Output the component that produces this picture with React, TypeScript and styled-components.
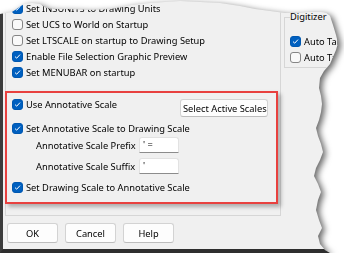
import styled, { createGlobalStyle } from 'styled-components';

const GlobalStyle = createGlobalStyle`
  html, body {
    margin: 0;
    padding: 0;
    background: #ffffff;
  }
  body {
    width: 344px;
    height: 253px;
    overflow: hidden;
    font-family: "Noto Sans", "Liberation Sans", sans-serif;
  }
`;

// torn paper edge of the screenshot (top and right)
const TORN = `polygon(
  0px 14px, 6px 13px, 12px 12px, 18px 8px, 24px 4px, 32px 3px, 40px 4px, 46px 8px,
  55px 9px, 70px 9px, 90px 10px, 110px 9px, 122px 7px, 132px 5px, 150px 3px, 165px 2px,
  180px 1px, 200px 2px, 220px 3px, 240px 6px, 255px 9px, 270px 11px, 285px 13px,
  300px 13px, 312px 12px, 320px 12px, 326px 13px, 330px 16px, 333px 25px, 336px 35px,
  338px 43px, 336px 50px, 333px 57px, 330px 64px, 324px 71px, 320px 78px, 319px 88px,
  321px 96px, 322px 104px, 321px 112px, 319px 120px, 316px 128px, 318px 136px,
  321px 144px, 323px 152px, 320px 160px, 316px 168px, 314px 176px, 318px 184px,
  321px 192px, 318px 200px, 316px 210px, 319px 220px, 322px 228px, 318px 236px,
  320px 244px, 325px 250px, 330px 253px, 0px 253px
)`;

const Shadow = styled.div`
  width: 344px;
  height: 253px;
  filter: drop-shadow(3px 2px 3px rgba(0, 0, 0, 0.6));
`;

const Dialog = styled.div`
  box-sizing: border-box;
  width: 344px;
  height: 253px;
  background: #f0f0f0;
  border-left: 3px solid #3b3b3b;
  border-bottom: 4px solid #2e2e2e;
  clip-path: ${TORN};
  display: flex;
  flex-direction: column;
  font-size: 9.3px;
  color: #000;
`;

const TopArea = styled.div`
  display: flex;
  height: 216px;
`;

const LeftPanel = styled.div`
  box-sizing: border-box;
  flex: none;
  width: 276px;
  margin-left: 2px;
  height: 216px;
  border: 1px solid #d6d6d6;
  border-top: none;
  display: flex;
  flex-direction: column;
`;

const OptionList = styled.div`
  display: flex;
  flex-direction: column;
  padding-left: 6px;
`;

const Row = styled.label<{ $mt?: number }>`
  display: flex;
  align-items: center;
  gap: 3px;
  height: 16px;
  margin-top: ${(p) => p.$mt ?? 0}px;
  white-space: nowrap;
`;

const Box = styled.span<{ $checked?: boolean }>`
  box-sizing: border-box;
  width: 11px;
  height: 11px;
  flex: none;
  border-radius: 3px;
  border: 1px solid ${(p) => (p.$checked ? '#0058b0' : '#858585')};
  background: ${(p) => (p.$checked ? '#0060c0' : '#f9f9f9')};
  display: flex;
  align-items: center;
  justify-content: center;
`;

const Check = ({ checked }: { checked?: boolean }) => (
  <Box $checked={checked}>
    {checked && (
      <svg width="7" height="7" viewBox="0 0 7 7">
        <polyline points="1,3.6 2.7,5.2 6,1.6" fill="none" stroke="#fff" strokeWidth="1" />
      </svg>
    )}
  </Box>
);

const Highlight = styled.div`
  box-sizing: border-box;
  margin: 11px 2px 0 -1px;
  border: 2px solid #e8413f;
  box-shadow: 3px 3px 4px rgba(0, 0, 0, 0.28);
  padding: 3px 8px 7px 5px;
  display: flex;
  flex-direction: column;
`;

const HeadRow = styled.div`
  display: flex;
  justify-content: space-between;
  align-items: flex-start;
  height: 20px;
`;

const Button = styled.button<{ $w?: number }>`
  box-sizing: border-box;
  width: ${(p) => (p.$w ? `${p.$w}px` : 'auto')};
  height: 18px;
  padding: 0 2px;
  margin-top: 3px;
  font: inherit;
  color: #000;
  background: #fdfdfd;
  border: 1px solid #d3d3d3;
  border-bottom-color: #bdbdbd;
  border-radius: 3px;
  white-space: nowrap;
`;

const FieldRow = styled.div<{ $mt: number }>`
  display: flex;
  align-items: center;
  height: 16px;
  margin-top: ${(p) => p.$mt}px;
  padding-left: 24px;
`;

const FieldLabel = styled.span`
  flex: none;
  width: 103px;
  white-space: nowrap;
`;

const TextBox = styled.div`
  box-sizing: border-box;
  flex: none;
  width: 40px;
  height: 16px;
  background: #ffffff;
  border: 1px solid #e2e2e2;
  border-bottom: 1px solid #8c8c8c;
  border-radius: 3px 3px 0 0;
  padding-left: 3px;
  line-height: 14px;
`;

const Digitizer = styled.div`
  box-sizing: border-box;
  position: relative;
  flex: 1;
  min-width: 0;
  margin: 17px 0 0 3px;
  height: 51px;
  border: 1px solid #d6d6d6;
  border-right: none;
  padding: 15px 0 0 5px;
  display: flex;
  flex-direction: column;
`;

const Legend = styled.span`
  position: absolute;
  top: -8px;
  left: 5px;
  padding: 0 3px 0 0;
  background: #f0f0f0;
  line-height: 14px;
`;

const ButtonBar = styled.div`
  display: flex;
  gap: 7px;
  margin-top: 7px;
  padding-left: 4px;

  & > button {
    margin-top: 0;
    height: 20px;
  }
`;

export default function App() {
  return (
    <>
      <GlobalStyle />
      <Shadow>
        <Dialog>
          <TopArea>
            <LeftPanel>
              <OptionList>
                <Row>
                  <Check checked />
                  Set INSUNITS to Drawing Units
                </Row>
                <Row>
                  <Check />
                  Set UCS to World on Startup
                </Row>
                <Row>
                  <Check />
                  Set LTSCALE on startup to Drawing Setup
                </Row>
                <Row>
                  <Check checked />
                  Enable File Selection Graphic Preview
                </Row>
                <Row>
                  <Check checked />
                  Set MENUBAR on startup
                </Row>
              </OptionList>
              <Highlight>
                <HeadRow>
                  <Row>
                    <Check checked />
                    Use Annotative Scale
                  </Row>
                  <Button $w={88}>Select Active Scales</Button>
                </HeadRow>
                <Row $mt={4}>
                  <Check checked />
                  Set Annotative Scale to Drawing Scale
                </Row>
                <FieldRow $mt={1}>
                  <FieldLabel>Annotative Scale Prefix</FieldLabel>
                  <TextBox>' =</TextBox>
                </FieldRow>
                <FieldRow $mt={5}>
                  <FieldLabel>Annotative Scale Suffix</FieldLabel>
                  <TextBox>'</TextBox>
                </FieldRow>
                <Row $mt={5}>
                  <Check checked />
                  Set Drawing Scale to Annotative Scale
                </Row>
              </Highlight>
            </LeftPanel>
            <Digitizer>
              <Legend>Digitizer</Legend>
              <Row>
                <Check checked />
                Auto Tablet On
              </Row>
              <Row>
                <Check />
                Auto Tablet Off
              </Row>
            </Digitizer>
          </TopArea>
          <ButtonBar>
            <Button $w={51}>OK</Button>
            <Button $w={51}>Cancel</Button>
            <Button $w={51}>Help</Button>
          </ButtonBar>
        </Dialog>
      </Shadow>
    </>
  );
}
